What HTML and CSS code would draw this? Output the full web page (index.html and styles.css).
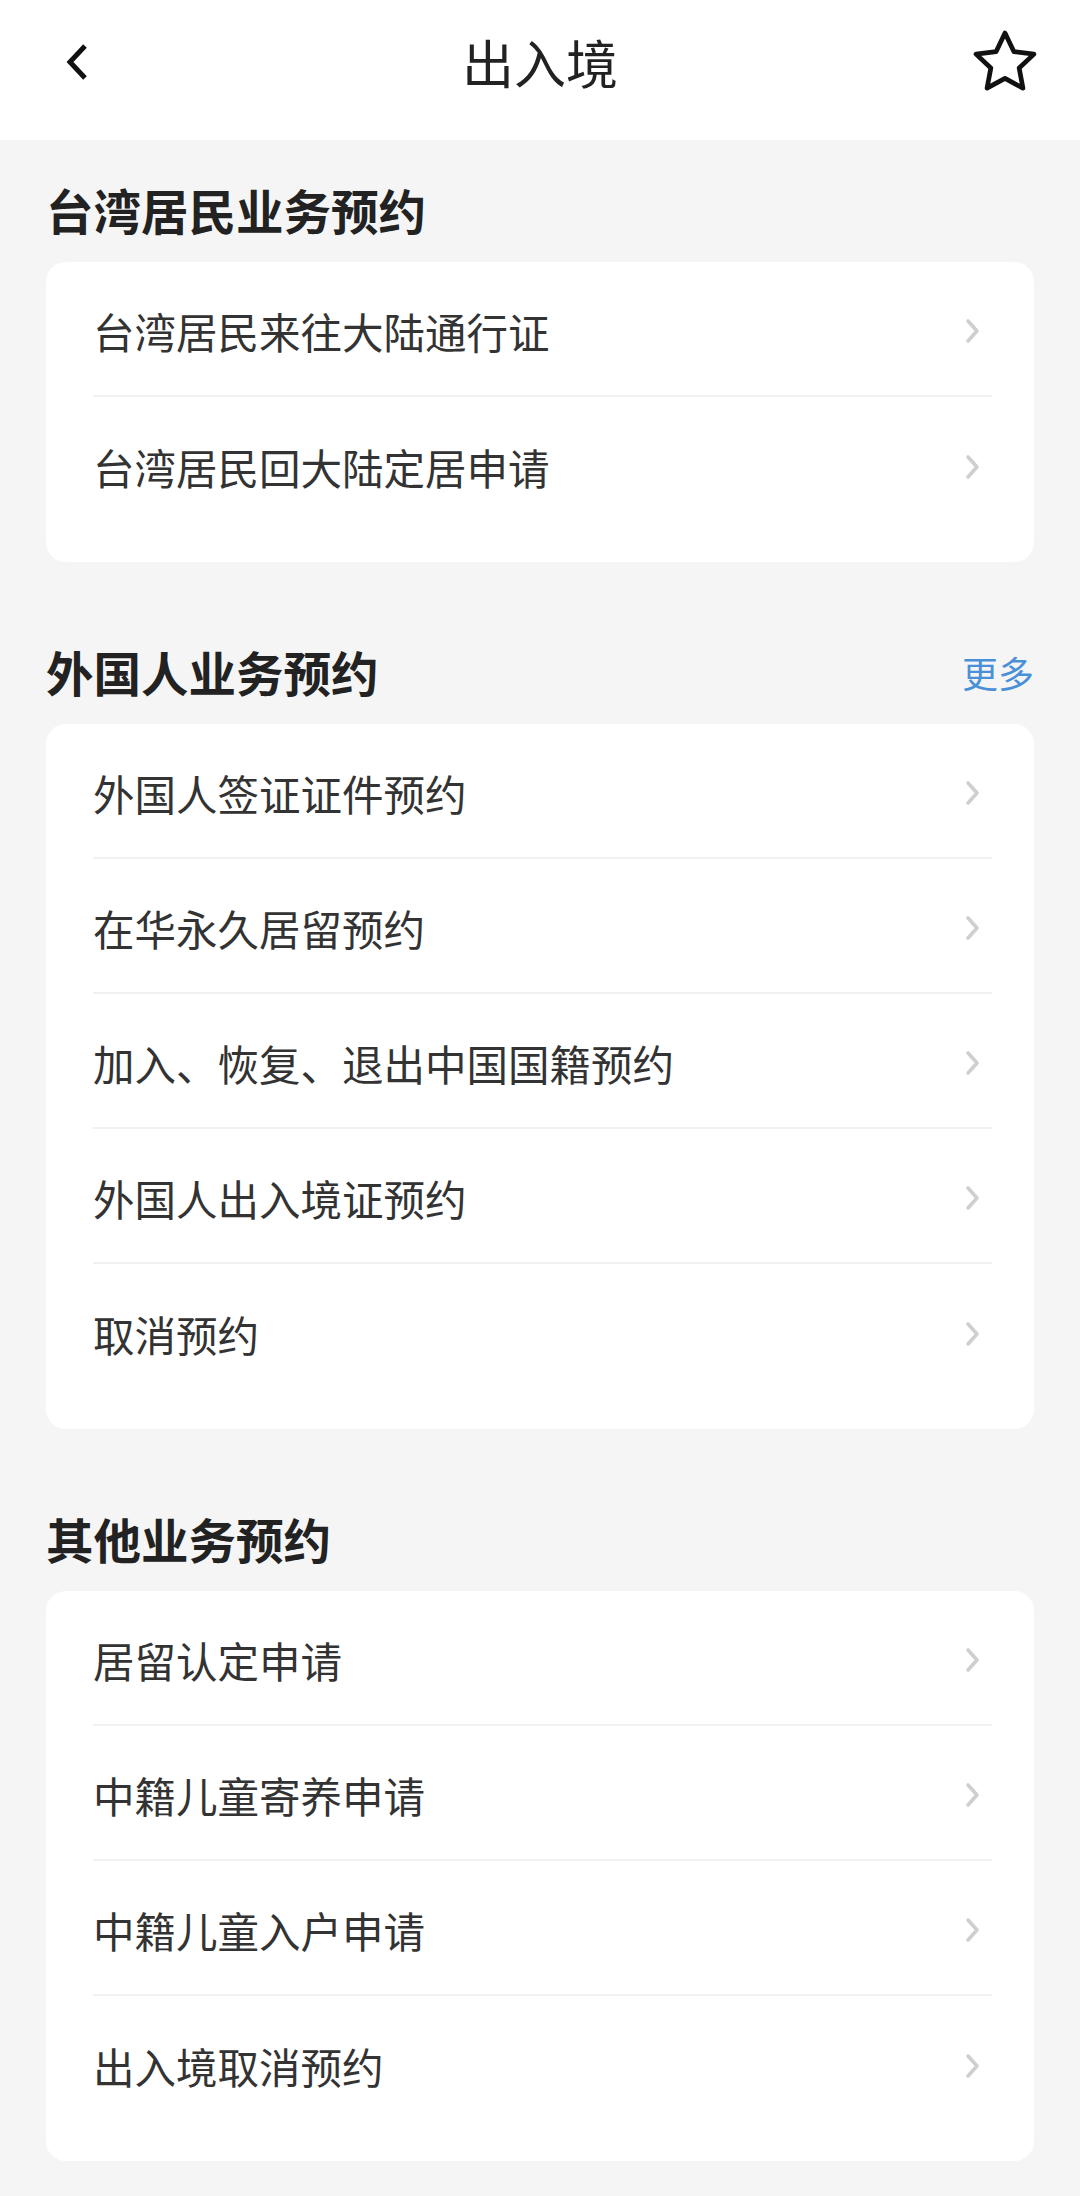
FILE: index.html
```html
<!DOCTYPE html>
<html lang="zh-CN">
<head>
    <meta charset="UTF-8">
    <meta name="viewport" content="width=device-width, initial-scale=1.0">
    <title>出入境</title>
    <link rel="stylesheet" href="styles.css">
</head>
<body>
    <div class="header">
        <div class="header-left">
            <svg class="back" width="24" height="40" viewBox="0 0 24 40">
                <polyline points="20,4 5,20 20,36" fill="none" stroke="#111" stroke-width="5" stroke-linejoin="miter"/>
            </svg>
        </div>
        <div class="title">出入境</div>
        <div class="header-right">
            <svg class="star" width="68" height="68" viewBox="1.2 1.2 21.6 21.6">
                <path d="M12 2.8l2.8 5.9 6.4.8-4.7 4.4 1.2 6.4L12 17.2l-5.7 3.1 1.2-6.4-4.7-4.4 6.4-.8z" fill="none" stroke="#111" stroke-width="1.5" stroke-linejoin="round"/>
            </svg>
        </div>
    </div>

    <div class="main">
        <div class="section">
            <div class="section-head">
                <div class="section-title">台湾居民业务预约</div>
            </div>
            <div class="card">
                <div class="row"><span>台湾居民来往大陆通行证</span><i class="arrow"></i></div>
                <div class="row"><span>台湾居民回大陆定居申请</span><i class="arrow"></i></div>
            </div>
        </div>

        <div class="section">
            <div class="section-head">
                <div class="section-title">外国人业务预约</div>
                <a class="more">更多</a>
            </div>
            <div class="card">
                <div class="row"><span>外国人签证证件预约</span><i class="arrow"></i></div>
                <div class="row"><span>在华永久居留预约</span><i class="arrow"></i></div>
                <div class="row"><span>加入、恢复、退出中国国籍预约</span><i class="arrow"></i></div>
                <div class="row"><span>外国人出入境证预约</span><i class="arrow"></i></div>
                <div class="row"><span>取消预约</span><i class="arrow"></i></div>
            </div>
        </div>

        <div class="section">
            <div class="section-head">
                <div class="section-title">其他业务预约</div>
            </div>
            <div class="card">
                <div class="row"><span>居留认定申请</span><i class="arrow"></i></div>
                <div class="row"><span>中籍儿童寄养申请</span><i class="arrow"></i></div>
                <div class="row"><span>中籍儿童入户申请</span><i class="arrow"></i></div>
                <div class="row"><span>出入境取消预约</span><i class="arrow"></i></div>
            </div>
        </div>
    </div>

    <script>
        // each row gets the same light chevron
        document.querySelectorAll(".arrow").forEach(function (el) {
            el.innerHTML = '<svg width="18" height="26" viewBox="0 0 18 26">' +
                '<polyline points="4,3 13,13 4,23" fill="none" stroke="#cfcfcf" stroke-width="3.6" stroke-linecap="round" stroke-linejoin="round"/></svg>';
        });
    </script>
</body>
</html>
```

FILE: styles.css
```css
body {
    margin: 0;
    font-family: "Noto Sans CJK SC", "Noto Sans", sans-serif;
    background-color: #f5f5f5;
    color: #333;
}
.header {
    height: 124px;
    padding-bottom: 16px;
    background: #fff;
    display: grid;
    grid-template-columns: 1fr auto 1fr;
    align-items: center;
}
.header-left {
    padding-left: 65px;
    display: flex;
}
.header-right {
    padding-right: 41px;
    display: flex;
    justify-content: flex-end;
}
.header svg {
    display: block;
}
.title {
    font-size: 52px;
    line-height: 64px;
    color: #222;
}
.main {
    padding: 38px 46px 0;
}
.section + .section {
    margin-top: 78px;
}
.section-head {
    display: flex;
    justify-content: space-between;
    align-items: center;
    height: 64px;
    margin-bottom: 20px;
}
.section-title {
    font-size: 47.5px;
    font-weight: bold;
    color: #222;
    line-height: 64px;
}
.more {
    font-size: 36px;
    color: #4a90d9;
}
.card {
    background: #fff;
    border-radius: 20px;
    padding-bottom: 30px;
}
.row {
    box-sizing: border-box;
    height: 135px;
    margin: 0 42px 0 47px;
    padding-top: 4px;
    border-bottom: 2px solid #f1f1f1;
    display: flex;
    align-items: center;
    justify-content: space-between;
    font-size: 41.5px;
    color: #333;
}
.row:last-child {
    border-bottom: none;
}
.arrow {
    display: flex;
    margin-right: 10px;
}
```
